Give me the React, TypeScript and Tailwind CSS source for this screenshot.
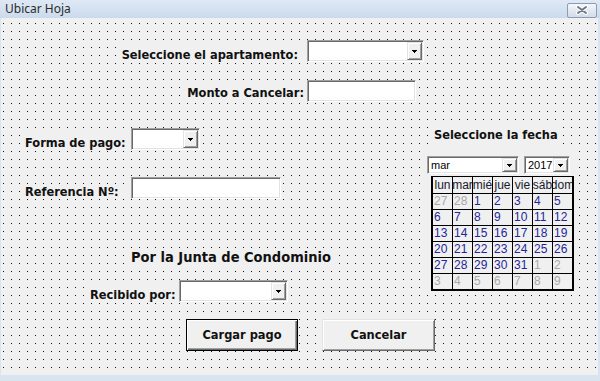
import React from "react";

const LBL = "font-['DejaVu_Sans_Condensed','DejaVu_Sans',sans-serif] font-bold text-[12.7px] leading-[15px] text-[#111] whitespace-nowrap bg-[#f0f0f0] shrink-0";
const SUNKEN =
  "bg-white border border-t-[#a0a0a0] border-l-[#a0a0a0] border-r-white border-b-white shadow-[inset_1px_1px_0_#696969,inset_-1px_-1px_0_#e3e3e3]";
const RAISED =
  "bg-[#f0f0f0] border border-t-[#e3e3e3] border-l-[#e3e3e3] border-r-[#696969] border-b-[#696969] shadow-[inset_1px_1px_0_#fff,inset_-1px_-1px_0_#a0a0a0]";

function Arrow() {
  return (
    <svg width="5" height="3" viewBox="0 0 5 3" shapeRendering="crispEdges">
      <path d="M0 0h5v1h-1v1h-1v1h-1v-1h-1v-1h-1z" fill="#000" />
    </svg>
  );
}

function Combo({ className, text }: { className: string; text?: string }) {
  return (
    <div className={`flex shrink-0 p-[1px] ${SUNKEN} ${className}`}>
      <div className="flex-1 min-w-0 pl-[2px] font-['Liberation_Sans',Arial,sans-serif] text-[11px] leading-[14px] text-black flex items-center">
        {text}
      </div>
      <div className={`w-[15px] shrink-0 flex items-center justify-center ${RAISED}`}>
        <Arrow />
      </div>
    </div>
  );
}

function TextBox({ className }: { className: string }) {
  return <div className={`shrink-0 ${SUNKEN} ${className}`} />;
}

type Cell = { d: number; g?: boolean };

const weeks: Cell[][] = [
  [{ d: 27, g: true }, { d: 28, g: true }, { d: 1 }, { d: 2 }, { d: 3 }, { d: 4 }, { d: 5 }],
  [{ d: 6 }, { d: 7 }, { d: 8 }, { d: 9 }, { d: 10 }, { d: 11 }, { d: 12 }],
  [{ d: 13 }, { d: 14 }, { d: 15 }, { d: 16 }, { d: 17 }, { d: 18 }, { d: 19 }],
  [{ d: 20 }, { d: 21 }, { d: 22 }, { d: 23 }, { d: 24 }, { d: 25 }, { d: 26 }],
  [{ d: 27 }, { d: 28 }, { d: 29 }, { d: 30 }, { d: 31 }, { d: 1, g: true }, { d: 2, g: true }],
  [
    { d: 3, g: true },
    { d: 4, g: true },
    { d: 5, g: true },
    { d: 6, g: true },
    { d: 7, g: true },
    { d: 8, g: true },
    { d: 9, g: true },
  ],
];

const days = ["lun", "mar", "mié", "jue", "vie", "sáb", "dom"];

const BTN = "shrink-0 h-[32px] font-['DejaVu_Sans_Condensed','DejaVu_Sans',sans-serif] font-bold text-[12.7px] text-[#111]";

export default function App() {
  return (
    <div className="w-[600px] h-[381px] overflow-hidden flex flex-col bg-[#d9e4f1]">
      {/* Title bar */}
      <div className="h-[18px] flex items-center justify-between bg-linear-to-b from-[#dfe9f5] to-[#cbdaec] pr-[3px]">
        <span className="pl-[5px] font-['Noto_Sans',sans-serif] text-[12px] leading-[14px] text-[#2b2b2b]">
          Ubicar Hoja
        </span>
        <div className="w-[30px] h-[15px] mt-[2px] rounded-[2px] border border-[#8e9cb2] bg-linear-to-b from-[#f4f7fb] to-[#d2dbe8] flex items-center justify-center">
          <svg width="14" height="10" viewBox="0 0 14 10">
            <path d="M3 2 L11 8 M11 2 L3 8" stroke="#fff" strokeWidth="4" strokeLinecap="round" />
            <path d="M3 2 L11 8 M11 2 L3 8" stroke="#6b778a" strokeWidth="2" strokeLinecap="round" />
          </svg>
        </div>
      </div>

      {/* Form body with design grid */}
      <div className="flex-1 ml-[1px] mr-[2px] mb-[6px] flex bg-[#f0f0f0] bg-[conic-gradient(at_1px_1px,transparent_75%,#151515_0)] bg-size-[8px_8px] bg-position-[2px_5px]">
        {/* Left column */}
        <div className="w-[423px] shrink-0 flex flex-col">
          <div className="mt-[22px] h-[22px] flex items-end pl-[116px]">
            <div className={`${LBL} w-[184px] text-right pr-[3px]`}>Seleccione el apartamento:</div>
            <Combo className="ml-[6px] w-[117px] h-[22px]" />
          </div>

          <div className="mt-[18px] h-[22px] flex items-end pl-[183px]">
            <div className={`${LBL} w-[123px] text-right pr-[3px] pb-[2px]`}>Monto a Cancelar:</div>
            <TextBox className="w-[109px] h-[22px]" />
          </div>

          <div className="mt-[26px] h-[22px] flex items-end pl-[20px]">
            <div className={`${LBL} w-[110px] pl-[4px]`}>Forma de pago:</div>
            <Combo className="w-[69px] h-[22px]" />
          </div>

          <div className="mt-[27px] h-[22px] flex items-end pl-[20px]">
            <div className={`${LBL} w-[110px] pl-[4px]`}>Referencia Nº:</div>
            <TextBox className="w-[150px] h-[22px]" />
          </div>

          <div className="mt-[49px] flex pl-[125px]">
            <div className="font-['DejaVu_Sans_Condensed','DejaVu_Sans',sans-serif] font-bold text-[14.5px] leading-[18px] text-[#111] bg-[#f0f0f0] px-[5px] whitespace-nowrap">
              Por la Junta de Condominio
            </div>
          </div>

          <div className="mt-[14px] h-[22px] flex items-end pl-[85px]">
            <div className={`${LBL} w-[93px] pl-[4px]`}>Recibido por:</div>
            <Combo className="w-[109px] h-[22px]" />
          </div>

          <div className="mt-[17px] flex pl-[185px]">
            <button className={`${BTN} w-[112px] bg-[#f0f0f0] border border-black shadow-[inset_1px_1px_0_#fff,inset_-1px_-1px_0_#696969,inset_-2px_-2px_0_#a0a0a0]`}>
              Cargar pago
            </button>
            <button className={`${BTN} ml-[24px] w-[113px] ${RAISED}`}>Cancelar</button>
          </div>
        </div>

        {/* Right column: calendar */}
        <div className="flex flex-col mt-[106px]">
          <div className={`${LBL} ml-[4px] w-[132px] py-[3px] pl-[6px]`}>Seleccione la fecha</div>
          <div className="w-[152px] bg-[#f0f0f0] pt-[11px] pl-[3px] pb-[2px] flex flex-col">
            <div className="flex">
              <Combo className="w-[92px] h-[18px]" text="mar" />
              <Combo className="ml-[5px] w-[46px] h-[18px]" text="2017" />
            </div>
            <div className="mt-[2px] ml-[4px] grid grid-cols-[repeat(7,19px)] grid-rows-[16px_repeat(6,15px)] gap-px bg-black border-2 border-t border-black w-max">
              {days.map((d) => (
                <div
                  key={d}
                  className="bg-[#f0f0f0] overflow-hidden flex justify-center font-['Liberation_Sans',Arial,sans-serif] text-[12px] leading-[16px] text-[#1a1a2e] whitespace-nowrap"
                >
                  {d}
                </div>
              ))}
              {weeks.flat().map((c, i) => (
                <div
                  key={i}
                  className={`bg-[#f0f0f0] overflow-hidden pl-[1px] font-['Liberation_Sans',Arial,sans-serif] text-[12px] leading-[15px] ${
                    c.g ? "text-[#a8a8a8]" : "text-[#25259a]"
                  }`}
                >
                  {c.d}
                </div>
              ))}
            </div>
          </div>
        </div>
      </div>
    </div>
  );
}
